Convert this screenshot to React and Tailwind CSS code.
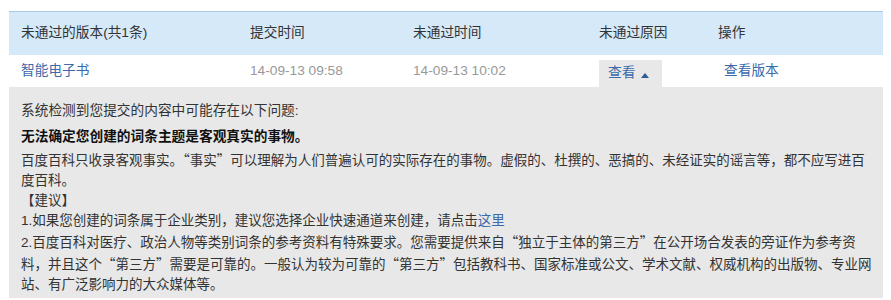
const font = { fontFamily: '"Liberation Sans", "Noto Sans CJK SC", sans-serif' }

// full-width quote marks, as the CJK font draws them
const Q = ({ children }) => (
  <span className="font-['Noto_Sans_CJK_SC']">{children}</span>
)

const App = () => {
  return (
    <div className="w-[891px] h-[300px] bg-white pt-[11px] pl-[9px] pr-[8px] text-[13.7px] text-[#333]" style={font}>
      <div className="border-t border-[#a9cbe9] bg-[#d6e9f9] h-[44px] grid grid-cols-[229px_163px_186px_119px_1fr] items-center">
        <div className="pl-3">未通过的版本(共1条)</div>
        <div className="pl-3">提交时间</div>
        <div className="pl-3">未通过时间</div>
        <div className="pl-3">未通过原因</div>
        <div className="pl-3">操作</div>
      </div>

      <div className="h-[32px] grid grid-cols-[229px_163px_186px_119px_1fr] items-center">
        <div className="pl-3 text-[#3a6aa8]">智能电子书</div>
        <div className="pl-3 text-[#999]">14-09-13 09:58</div>
        <div className="pl-3 text-[#999]">14-09-13 10:02</div>
        <div className="pl-3 self-end">
          <div className="w-[63px] h-[27px] bg-[#e8e8e8] flex items-center pl-[9px] gap-[6px] text-[#3a6aa8]">
            <span>查看</span>
            <svg width="8" height="5" viewBox="0 0 8 5" className="mt-[3px]">
              <polygon points="4,0 8,5 0,5" fill="#2f5c94" />
            </svg>
          </div>
        </div>
        <div className="pl-[18px] text-[#3a6aa8]">查看版本</div>
      </div>

      <div className="bg-[#e8e8e8] h-[211px] pt-[14px] pl-3 pr-2 leading-[20px] overflow-hidden">
        <p>系统检测到您提交的内容中可能存在以下问题:</p>
        <p className="mt-[6px] font-bold text-[#111]">无法确定您创建的词条主题是客观真实的事物。</p>
        <div className="mt-[2px] text-[13.5px] whitespace-nowrap">
          <p>
            百度百科只收录客观事实。<Q>“</Q>事实<Q>”</Q>可以理解为人们普遍认可的实际存在的事物。虚假的、杜撰的、恶搞的、未经证实的谣言等，都不应写进百
            <br />
            度百科。
          </p>
          <p>【建议】</p>
          <p>
            1.如果您创建的词条属于企业类别，建议您选择企业快速通道来创建，请点击<span className="text-[#3a6aa8]">这里</span>
          </p>
          <p>
            2.百度百科对医疗、政治人物等类别词条的参考资料有特殊要求。您需要提供来自<Q>“</Q>独立于主体的第三方<Q>”</Q>在公开场合发表的旁证作为参考资
            <br />
            料，并且这个<Q>“</Q>第三方<Q>”</Q>需要是可靠的。一般认为较为可靠的<Q>“</Q>第三方<Q>”</Q>包括教科书、国家标准或公文、学术文献、权威机构的出版物、专业网
            <br />
            站、有广泛影响力的大众媒体等。
          </p>
        </div>
      </div>
    </div>
  )
}

export default App
